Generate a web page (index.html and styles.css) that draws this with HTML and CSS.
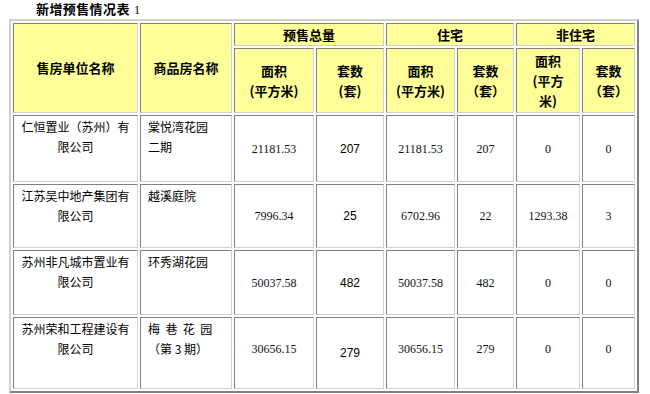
FILE: index.html
```html
<!DOCTYPE html>
<html lang="zh-CN">
<head>
<meta charset="utf-8">
<title>新增预售情况表</title>
<link rel="stylesheet" href="styles.css">
</head>
<body>
<div class="page">
  <h1 class="title">新增预售情况表<span class="title-num">1</span></h1>
  <table class="sales">
    <colgroup>
      <col class="c-company">
      <col class="c-project">
      <col class="c-area1">
      <col class="c-count1">
      <col class="c-area2">
      <col class="c-count2">
      <col class="c-area3">
      <col class="c-count3">
    </colgroup>
    <thead>
      <tr class="r-head1">
        <th rowspan="2">售房单位名称</th>
        <th rowspan="2">商品房名称</th>
        <th colspan="2">预售总量</th>
        <th colspan="2">住宅</th>
        <th colspan="2">非住宅</th>
      </tr>
      <tr class="r-head2">
        <th>面积<br>(平方米)</th>
        <th>套数<br>(套)</th>
        <th>面积<br>(平方米)</th>
        <th>套数<br>（套）</th>
        <th>面积<br>(平方<br>米)</th>
        <th>套数<br>（套）</th>
      </tr>
    </thead>
    <tbody>
      <tr class="r-d1">
        <td class="company">仁恒置业（苏州）有限公司</td>
        <td class="project">棠悦湾花园<br>二期</td>
        <td class="num">21181.53</td>
        <td class="num sans">207</td>
        <td class="num">21181.53</td>
        <td class="num">207</td>
        <td class="num">0</td>
        <td class="num">0</td>
      </tr>
      <tr class="r-d2">
        <td class="company">江苏吴中地产集团有限公司</td>
        <td class="project">越溪庭院</td>
        <td class="num">7996.34</td>
        <td class="num sans">25</td>
        <td class="num">6702.96</td>
        <td class="num">22</td>
        <td class="num">1293.38</td>
        <td class="num">3</td>
      </tr>
      <tr class="r-d3">
        <td class="company">苏州非凡城市置业有限公司</td>
        <td class="project">环秀湖花园</td>
        <td class="num">50037.58</td>
        <td class="num sans">482</td>
        <td class="num">50037.58</td>
        <td class="num">482</td>
        <td class="num">0</td>
        <td class="num">0</td>
      </tr>
      <tr class="r-d4">
        <td class="company">苏州荣和工程建设有限公司</td>
        <td class="project">梅&nbsp; 巷&nbsp; 花&nbsp; 园<br>（第 3 期）</td>
        <td class="num lift">30656.15</td>
        <td class="num sans">279</td>
        <td class="num lift">30656.15</td>
        <td class="num lift">279</td>
        <td class="num lift">0</td>
        <td class="num lift">0</td>
      </tr>
    </tbody>
  </table>
</div>
</body>
</html>
```

FILE: styles.css
```css
html, body {
  margin: 0;
  padding: 0;
  background: #ffffff;
}

.page {
  padding: 0 0 0 9px;
  font-family: "Noto Sans CJK SC", "Liberation Sans", sans-serif;
  color: #000;
}

.title {
  margin: 0 0 0 27px;
  height: 19px;
  font-size: 13px;
  line-height: 17px;
  font-weight: bold;
  letter-spacing: 0.4px;
}

.title-num {
  margin-left: 4px;
  font-family: "Liberation Serif", serif;
  font-weight: normal;
  font-size: 13px;
  color: #101040;
}

.sales {
  box-sizing: border-box;
  width: 630px;
  table-layout: fixed;
  border-collapse: separate;
  border-spacing: 2px;
  border-style: solid;
  border-width: 2px;
  border-color: #d4d0c8 #808080 #808080 #d4d0c8;
  background: #ffffff;
}

.c-company { width: 125px; }
.c-project { width: 92px; }
.c-area1 { width: 80px; }
.c-count1 { width: 68px; }
.c-area2 { width: 69px; }
.c-count2 { width: 57px; }
.c-area3 { width: 64px; }
.c-count3 { width: 53px; }

.sales th,
.sales td {
  box-sizing: border-box;
  border-style: solid;
  border-width: 1px;
  border-color: #808080 #d4d0c8 #d4d0c8 #808080;
  padding: 0 1px;
}

.sales th {
  background: #ffff99;
  font-size: 13px;
  line-height: 20px;
  font-weight: bold;
  text-align: center;
  vertical-align: middle;
}

.r-head1 { height: 23px; }
.r-head2 { height: 65px; }
.r-d1 { height: 67px; }
.r-d2 { height: 64px; }
.r-d3 { height: 65px; }
.r-d4 { height: 72px; }

.sales td {
  background: #ffffff;
  font-size: 12px;
  line-height: 20px;
}

.sales td.company {
  vertical-align: top;
  text-align: center;
  padding: 1px 4px 0;
}

.sales td.project {
  vertical-align: top;
  text-align: left;
  padding: 1px 2px 0 7px;
}

.sales td.num {
  vertical-align: middle;
  text-align: center;
  font-family: "Liberation Serif", serif;
  font-size: 12px;
  color: #111122;
}

.sales td.num.sans {
  font-family: "Liberation Sans", sans-serif;
  color: #000;
}

.sales td.num.lift {
  padding-bottom: 8px;
}
```
